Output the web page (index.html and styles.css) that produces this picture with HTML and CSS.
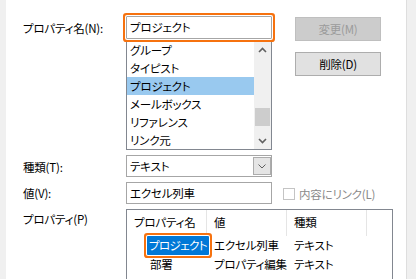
FILE: index.html
```html
<!DOCTYPE html>
<html lang="ja">
<head>
    <meta charset="UTF-8">
    <title>プロパティ</title>
    <link rel="stylesheet" href="styles.css">
</head>
<body>
    <div class="window">
        <div class="edge edge-left"></div>
        <div class="dialog">
            <label class="lbl lbl-name">プロパティ名(N):</label>
            <div class="field name-box">プロジェクト</div>
            <div class="buttons">
                <button class="btn" disabled>変更(M)</button>
                <button class="btn">削除(D)</button>
            </div>

            <div class="listbox">
                <ul class="items">
                    <li>グループ</li>
                    <li>タイピスト</li>
                    <li class="selected">プロジェクト</li>
                    <li>メールボックス</li>
                    <li>リファレンス</li>
                    <li>リンク元</li>
                </ul>
                <div class="scrollbar">
                    <span class="arrow">
                        <svg width="9" height="6" viewBox="0 0 9 6"><polyline points="1,5 4.5,1.5 8,5" fill="none" stroke="#606060" stroke-width="1.6"/></svg>
                    </span>
                    <div class="track"><div class="thumb"></div></div>
                    <span class="arrow">
                        <svg width="9" height="6" viewBox="0 0 9 6"><polyline points="1,1 4.5,4.5 8,1" fill="none" stroke="#606060" stroke-width="1.6"/></svg>
                    </span>
                </div>
            </div>

            <label class="lbl lbl-type">種類(T):</label>
            <div class="field combo">
                <span class="combo-text">テキスト</span>
                <span class="drop">
                    <svg width="8" height="5" viewBox="0 0 8 5"><polyline points="0.5,0.5 4,4 7.5,0.5" fill="none" stroke="#606060" stroke-width="1"/></svg>
                </span>
            </div>

            <label class="lbl lbl-value">値(V):</label>
            <div class="field value-box">エクセル列車</div>
            <div class="check">
                <span class="box"></span>
                <span>内容にリンク(L)</span>
            </div>

            <label class="lbl lbl-props">プロパティ(P)</label>
            <div class="listview">
                <div class="lv-row lv-head">
                    <div class="cell">プロパティ名</div>
                    <div class="cell">値</div>
                    <div class="cell">種類</div>
                </div>
                <div class="lv-row">
                    <div class="cell name"><span class="tag current">プロジェクト</span></div>
                    <div class="cell">エクセル列車</div>
                    <div class="cell">テキスト</div>
                </div>
                <div class="lv-row">
                    <div class="cell name"><span class="tag">部署</span></div>
                    <div class="cell">プロパティ編集</div>
                    <div class="cell">テキスト</div>
                </div>
            </div>
        </div>
        <div class="edge edge-right"></div>
    </div>
</body>
</html>
```

FILE: styles.css
```css
* {
    box-sizing: border-box;
}
body {
    margin: 0;
    width: 416px;
    height: 279px;
    overflow: hidden;
    font-family: "Noto Sans CJK JP", sans-serif;
    font-size: 11.5px;
    letter-spacing: -0.2px;
    font-feature-settings: "palt";
    color: #000;
}
.window {
    display: flex;
    height: 279px;
}
.edge {
    background-color: #f0f0f0;
}
.edge-left {
    width: 6px;
}
.edge-right {
    width: 10px;
    border-left: 1px solid #dedede;
}
.dialog {
    width: 400px;
    background-color: #fff;
    padding: 16px 0 0 17px;
    display: grid;
    grid-template-columns: 103px 146px 121px;
    grid-template-areas:
        "lname name buttons"
        ".     list buttons"
        "ltype type ."
        "lval  val  check"
        "lprop props props";
    grid-template-rows: 23px 111px 27px 27px 1fr;
    align-items: start;
}
.lbl {
    line-height: 16px;
}
.lbl-name {
    grid-area: lname;
    padding-top: 4px;
}
.lbl-type {
    grid-area: ltype;
    padding-top: 9px;
}
.lbl-value {
    grid-area: lval;
    padding-top: 8px;
}
.lbl-props {
    grid-area: lprop;
    padding-top: 7px;
}
.field {
    height: 23px;
    border: 1px solid #a6a6a6;
    padding-left: 3px;
    line-height: 20px;
    background: #fff;
}
.name-box {
    grid-area: name;
    position: relative;
    z-index: 1;
    border-radius: 1px;
    box-shadow: 0 0 0 1px #fff, 0 0 0 3px #f6720f;
}
.buttons {
    grid-area: buttons;
    display: flex;
    flex-direction: column;
    gap: 11px;
    padding: 1px 0 0 23px;
}
.btn {
    width: 86px;
    height: 24px;
    font: inherit;
    letter-spacing: inherit;
    font-feature-settings: "palt";
    background-color: #e1e1e1;
    border: 1px solid #adadad;
    color: #000;
    padding: 0;
}
.btn:disabled {
    background-color: #cccccc;
    border-color: #bfbfbf;
    color: #9b9b9b;
}
.listbox {
    grid-area: list;
    margin-top: 1px;
    height: 110px;
    border: 1px solid #828790;
    display: flex;
}
.items {
    list-style: none;
    margin: 0;
    padding: 0;
    flex: 1;
}
.items li {
    height: 18px;
    line-height: 18px;
    padding-left: 3px;
}
.items li.selected {
    background-color: #99c9ef;
}
.scrollbar {
    width: 17px;
    background-color: #f0f0f0;
    display: flex;
    flex-direction: column;
}
.arrow {
    height: 17px;
    display: flex;
    align-items: center;
    justify-content: center;
}
.track {
    flex: 1;
    padding: 50px 1px 0;
}
.thumb {
    height: 18px;
    background-color: #cdcdcd;
}
.combo {
    grid-area: type;
    margin-top: 5px;
    height: 22px;
    display: flex;
    justify-content: space-between;
    padding-right: 0;
}
.combo-text {
    line-height: 20px;
}
.drop {
    width: 18px;
    height: 18px;
    margin: 1px 0;
    background-color: #e5e5e5;
    border: 1px solid #acacac;
    display: flex;
    align-items: center;
    justify-content: center;
}
.value-box {
    grid-area: val;
    margin-top: 5px;
    height: 22px;
}
.check {
    grid-area: check;
    margin: 10px 0 0 11px;
    display: flex;
    align-items: center;
    gap: 4px;
    color: #8a8a8a;
    line-height: 14px;
}
.check .box {
    width: 12px;
    height: 12px;
    border: 1px solid #c4c4c4;
}
.listview {
    grid-area: props;
    margin-top: 5px;
    height: 80px;
    border: 1px solid #828790;
    border-bottom: 0;
}
.lv-row {
    display: flex;
    height: 19px;
    line-height: 19px;
}
.lv-head {
    height: 26px;
    line-height: 25px;
}
.cell {
    width: 80px;
    padding-left: 7px;
    white-space: nowrap;
}
.lv-head .cell {
    border-right: 1px solid #e5e5e5;
}
.cell.name {
    padding-left: 20px;
}
.tag {
    display: inline-block;
    padding: 0 3px;
    height: 19px;
}
.tag.current {
    padding: 0 2px;
    letter-spacing: -0.6px;
    background-color: #0078d7;
    color: #fff;
    border-radius: 1px;
    box-shadow: 0 0 0 1px #fff, 0 0 0 3px #f6720f;
}
```
